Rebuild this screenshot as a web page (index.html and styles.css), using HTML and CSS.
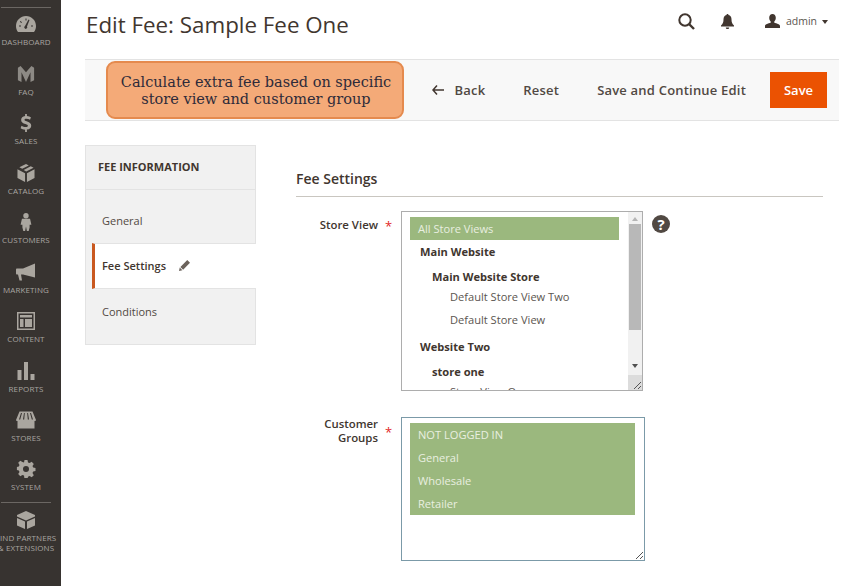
FILE: index.html
```html
<!DOCTYPE html>
<html lang="en">
<head>
<meta charset="UTF-8">
<title>Edit Fee: Sample Fee One</title>
<link rel="stylesheet" href="styles.css">
</head>
<body>
<div class="page">
  <nav class="sidebar">
    <a class="nav-item first">
      <svg viewBox="0 0 20 16"><path fill-rule="evenodd" d="M10 0C4.500 0 0 4.400 0 10c0 2.300.7 4.300 2 6h16c1.300-1.700 2-3.700 2-6 0-5.600-4.500-10-10-10zM9 10l3.500-6.500 1 .5L11 10.500a1.500 1.500 0 1 1-2-.5zM3 9.500h2v1H3zM15 9.500h2v1h-2zM4.500 5l1.500 1.300-.7.7-1.500-1.300zM9.500 2.500h1v2h-1z"/></svg>
      <span>DASHBOARD</span>
    </a>
    <a class="nav-item">
      <svg class="icon-faq" viewBox="0 0 18 20"><path d="M0 3l3-2 6 7 6-7 3 2v14l-4 2V8l-5 11-5-11v11l-4-2z"/></svg>
      <span>FAQ</span>
    </a>
    <a class="nav-item">
      <svg viewBox="0 0 12 20"><path d="M5 0h2v2.200c2 .2 3.500.8 4.500 1.500l-1 2.800C9.300 5.700 7.900 5.200 6.300 5.200c-1.300 0-2 .5-2 1.200 0 .8 1 1.200 3 2 3 1 4.500 2.300 4.500 4.600 0 2.200-1.600 3.900-4.800 4.300V20H5v-2.500c-2-.1-3.800-.8-5-1.600l1-2.900c1.300.9 3 1.500 4.800 1.500 1.400 0 2.300-.5 2.300-1.400 0-.8-.9-1.300-2.700-1.900C2.500 10.200.6 9 .6 6.600.6 4.400 2.200 2.700 5 2.300z"/></svg>
      <span>SALES</span>
    </a>
    <a class="nav-item">
      <svg viewBox="0 0 18 19"><path d="M9 0l3 1.500-7 3.600-3-1.600zM14 2.500l3 1.500-7.800 4L6.600 6.400zM0 5.500l8 4.200V19l-8-4.300zM18 5.500v9.200L10 19V9.700z"/></svg>
      <span>CATALOG</span>
    </a>
    <a class="nav-item">
      <svg viewBox="0 0 12 20"><circle cx="6" cy="3" r="3"/><path d="M1.500 6.500h9L12 13h-2v3l-1 4H7l-1-5-1 5H3l-1-4v-3H0z"/></svg>
      <span>CUSTOMERS</span>
    </a>
    <a class="nav-item">
      <svg viewBox="0 0 20 17"><path d="M19 0v14L7 11H5l1 6H3.500L2 11H1C.4 11 0 10.500 0 10V6c0-.5.4-1 1-1h6z"/></svg>
      <span>MARKETING</span>
    </a>
    <a class="nav-item">
      <svg viewBox="0 0 18 18"><path fill-rule="evenodd" d="M0 0h18v18H0zM1.500 1.500v15h15v-15zM3 3h12v2.500H3zM3 7h3.500v8H3zM8 7h7v8H8z"/></svg>
      <span>CONTENT</span>
    </a>
    <a class="nav-item">
      <svg viewBox="0 0 17 18"><path d="M0 8h4v10H0zM6.500 0h4v18h-4zM13 12h4v6h-4z"/></svg>
      <span>REPORTS</span>
    </a>
    <a class="nav-item">
      <svg viewBox="0 0 20 17"><path fill-rule="evenodd" d="M3.500 0h13L20 8.500c0 .8-.7 1-1.500 1v7.500h-17V9.500C.7 9.500 0 9.300 0 8.500zM5 1.500L3 8h1.200l1.800-6.500zM8 1.500L7 8h1.200l.6-6.500zM11.200 1.500l.6 6.500H13l-1-6.500zM14 1.500L15.800 8H17l-2-6.500z"/></svg>
      <span>STORES</span>
    </a>
    <a class="nav-item last">
      <svg viewBox="0 0 18 18"><path fill-rule="evenodd" d="M7.500 0h3l.5 2.400 1.600.7 2.100-1.300 2.100 2.100-1.300 2.100.7 1.600 2.300.4v3l-2.300.5-.7 1.600 1.300 2.100-2.100 2.100-2.100-1.300-1.600.7-.5 2.300h-3L7 15.600l-1.600-.7-2.100 1.300-2.100-2.100 1.300-2.100-.7-1.600L-.1 10V7l1.900-.5.7-1.600-1.300-2.100 2.100-2.100 2.100 1.300L7 2.400zM9 6a3 3 0 1 0 0 6 3 3 0 0 0 0-6z"/></svg>
      <span>SYSTEM</span>
    </a>
    <a class="nav-item partners">
      <svg viewBox="0 0 18 18"><path d="M9 0l9 4v1.500L9 9.500 0 5.500V4zM0 7l8 3.600V18l-8-3.600zM18 7v7.400L10 18v-7.400z"/></svg>
      <span>FIND PARTNERS<br>&amp; EXTENSIONS</span>
    </a>
  </nav>

  <main class="main">
    <header class="topbar">
      <h1>Edit Fee: Sample Fee One</h1>
      <div class="top-actions">
        <svg class="icon-search" viewBox="0 0 17 17"><circle cx="7" cy="7" r="5.700" fill="none" stroke="#41362f" stroke-width="2"/><path d="M11 11l5 5" stroke="#41362f" stroke-width="2.400"/></svg>
        <svg class="icon-bell" viewBox="0 0 13 15"><path d="M6.500 0c.6 0 1 .4 1 1 2 .5 3 2 3 4.300 0 3 .6 4.500 2.500 6.200v1H0v-1c1.900-1.700 2.500-3.200 2.500-6.200 0-2.300 1-3.800 3-4.300 0-.6.400-1 1-1zM4.800 13.500h3.400c0 1-.7 1.500-1.700 1.500s-1.700-.5-1.700-1.500z" fill="#41362f"/></svg>
        <div class="user">
          <svg viewBox="0 0 15 14"><path d="M7.500 0c2 0 3.300 1.500 3.300 3.700 0 1.600-.7 3-1.500 3.800v1.300c2 .7 5.700 1.400 5.700 3.200v2H0v-2c0-1.800 3.700-2.500 5.700-3.200V7.500c-.8-.8-1.500-2.200-1.500-3.800C4.200 1.500 5.500 0 7.500 0z" fill="#41362f"/></svg>
          <span>admin</span>
          <i class="caret"></i>
        </div>
      </div>
    </header>

    <div class="toolbar">
      <div class="callout">Calculate extra fee based on specific store view and customer group</div>
      <div class="buttons">
        <a class="btn btn-back">
          <svg viewBox="0 0 12 10"><path d="M5 .5L1 5l4 4.500M1 5h11" fill="none" stroke="#41362f" stroke-width="1.500"/></svg>
          Back
        </a>
        <a class="btn">Reset</a>
        <a class="btn">Save and Continue Edit</a>
        <a class="btn-save">Save</a>
      </div>
    </div>

    <div class="columns">
      <aside class="tabs">
        <div class="tabs-title">FEE INFORMATION</div>
        <a class="tab tab-general">General</a>
        <a class="tab tab-active">Fee Settings
          <svg viewBox="0 0 12 12"><path d="M9 0l3 3-7.500 7.500-3-3zM.8 8.300l2.900 2.900L0 12z" fill="#6b625b"/></svg>
        </a>
        <a class="tab tab-conditions">Conditions</a>
      </aside>

      <section class="content">
        <h2>Fee Settings</h2>

        <div class="field field-store">
          <label>Store View</label>
          <b class="req">*</b>
          <div class="listbox listbox-store">
            <div class="list">
              <div class="opt selected">All Store Views</div>
              <div class="opt site">Main Website</div>
              <div class="opt store">Main Website Store</div>
              <div class="opt view">Default Store View Two</div>
              <div class="opt view">Default Store View</div>
              <div class="opt site site-two">Website Two</div>
              <div class="opt store">store one</div>
              <div class="opt view">Store View One</div>
            </div>
            <div class="scrollbar">
              <i class="arrow-up"></i>
              <div class="thumb"></div>
              <i class="arrow-down"></i>
              <div class="corner">
                <svg viewBox="0 0 10 10"><path d="M9 2L2 9M9 6L6 9" stroke="#555" fill="none"/></svg>
              </div>
            </div>
          </div>
          <span class="help">?</span>
        </div>

        <div class="field field-groups">
          <label>Customer<br>Groups</label>
          <b class="req">*</b>
          <div class="listbox listbox-groups">
            <div class="list">
              <div class="opt selected">NOT LOGGED IN</div>
              <div class="opt selected">General</div>
              <div class="opt selected">Wholesale</div>
              <div class="opt selected">Retailer</div>
            </div>
            <svg class="grip" viewBox="0 0 10 10"><path d="M9 2L2 9M9 6L6 9" stroke="#555" fill="none"/></svg>
          </div>
        </div>
      </section>
    </div>
  </main>
</div>
</body>
</html>
```

FILE: styles.css
```css
html, body {
  margin: 0;
  height: 100%;
  overflow: hidden;
}
body {
  font-family: "Open Sans", sans-serif;
  color: #41362f;
  background: #fff;
}
a {
  color: inherit;
  text-decoration: none;
}
.page {
  display: flex;
  height: 586px;
}

/* left menu */
.sidebar {
  width: 61px;
  flex: none;
  box-sizing: border-box;
  background: #373330;
  overflow: hidden;
  display: flex;
  flex-direction: column;
  align-items: center;
  padding-right: 9px;
}
.nav-item {
  width: 52px;
  height: 49.500px;
  flex: none;
  display: flex;
  flex-direction: column;
  align-items: center;
  justify-content: flex-end;
  color: #a9a5a0;
  font-size: 8px;
  line-height: 10px;
  letter-spacing: .1px;
  text-align: center;
  white-space: nowrap;
}
.nav-item svg {
  height: 18px;
  width: 20px;
  fill: #aaa69f;
  margin-bottom: 4px;
}
.nav-item .icon-faq {
  fill: #8d8a85;
}
.nav-item.first {
  height: 40px;
  border-top: 1px solid #6b6763;
  margin-top: 7px;
  box-sizing: border-box;
  width: 50px;
}
.nav-item.last {
  height: 60px;
  padding-bottom: 10px;
  box-sizing: border-box;
  border-bottom: 1px solid #6b6763;
  width: 50px;
}
.nav-item.partners {
  height: 62px;
  justify-content: flex-start;
  padding-top: 8px;
  box-sizing: border-box;
}
.nav-item.partners svg {
  margin-bottom: 4px;
}

.main {
  width: 754px;
  margin-left: 24px;
  flex: none;
}

/* top */
.topbar {
  height: 59px;
  display: flex;
  justify-content: space-between;
  align-items: flex-start;
}
h1 {
  margin: 7px 0 0 1px;
  font-size: 22.350px;
  line-height: 35px;
  font-weight: 400;
  color: #41362f;
}
.top-actions {
  display: flex;
  align-items: center;
  height: 16px;
  margin-top: 13px;
  margin-right: 11px;
}
.icon-search {
  width: 17px;
  height: 17px;
}
.icon-bell {
  width: 13px;
  height: 15px;
  margin-left: 26px;
}
.user {
  display: flex;
  align-items: center;
  margin-left: 31px;
  font-size: 10.500px;
  color: #5b5550;
}
.user svg {
  width: 15px;
  height: 14px;
  margin-right: 6px;
}
.caret {
  width: 0;
  height: 0;
  margin-left: 5px;
  margin-top: 2px;
  border-left: 3.500px solid transparent;
  border-right: 3.500px solid transparent;
  border-top: 4px solid #41362f;
}

/* action bar */
.toolbar {
  height: 62px;
  box-sizing: border-box;
  background: #f8f8f8;
  border-top: 1px solid #e3e3e3;
  border-bottom: 1px solid #e3e3e3;
  display: flex;
  align-items: center;
  padding-left: 21px;
  padding-right: 12px;
  justify-content: space-between;
}
.callout {
  width: 298px;
  height: 58px;
  flex: none;
  box-sizing: border-box;
  background: #f4aa78;
  border: 2px solid #e58a4e;
  border-radius: 9px;
  font-family: "DejaVu Serif", serif;
  font-size: 14.500px;
  line-height: 17px;
  color: #2e2b3a;
  text-align: center;
  padding: 11px 5px 0 7px;
}
.buttons {
  display: flex;
  align-items: center;
  white-space: nowrap;
}
.btn {
  font-size: 13px;
  font-weight: 600;
  color: #514943;
  margin-left: 38px;
  letter-spacing: .2px;
  display: flex;
  align-items: center;
}
.btn-back {
  margin-left: 0;
}
.btn-back svg {
  width: 12px;
  height: 10px;
  margin-right: 11px;
}
.btn-save {
  width: 57px;
  height: 36px;
  flex: none;
  margin-left: 24px;
  background: #eb5202;
  color: #fff;
  font-size: 13px;
  font-weight: 600;
  line-height: 36px;
  text-align: center;
}

/* columns */
.columns {
  display: flex;
}
.tabs {
  width: 171px;
  height: 200px;
  box-sizing: border-box;
  margin-top: 24px;
  background: #f1f1f1;
  border: 1px solid #e3e3e3;
  font-size: 11px;
  flex: none;
}
.tabs-title {
  height: 44px;
  line-height: 42px;
  padding-left: 12px;
  font-weight: 700;
  color: #41362f;
  border-bottom: 1px solid #e3e3e3;
  box-sizing: border-box;
}
.tab {
  display: flex;
  align-items: center;
  padding-left: 16px;
  box-sizing: border-box;
  color: #514943;
}
.tab-general {
  height: 53px;
  padding-top: 8px;
}
.tab-active {
  height: 46px;
  margin-left: 6px;
  margin-right: -1px;
  padding-left: 7px;
  padding-bottom: 2px;
  background: #fff;
  border-left: 3px solid #c9581f;
  border-top: 1px solid #e3e3e3;
  border-bottom: 1px solid #e3e3e3;
  color: #41362f;
  font-weight: 600;
}
.tab-active svg {
  width: 11px;
  height: 11px;
  margin-left: 13px;
}
.tab-conditions {
  height: 44px;
}

.content {
  margin-left: 40px;
  width: 527px;
  flex: none;
}
h2 {
  margin: 0;
  padding-top: 49px;
  height: 26px;
  line-height: 18px;
  font-size: 14px;
  font-weight: 600;
  border-bottom: 1px solid #c9c6c0;
  color: #41362f;
}
.field {
  display: flex;
  align-items: flex-start;
  font-size: 11.100px;
  margin-top: 26px;
}
.field-store {
  margin-top: 14px;
}
.field label {
  width: 82px;
  text-align: right;
  font-size: 11.400px;
  font-weight: 600;
  line-height: 14px;
  padding-top: 7px;
  white-space: nowrap;
}
.field-groups label {
  padding-top: 0;
}
.req {
  width: 23px;
  box-sizing: border-box;
  padding-left: 7px;
  color: #e22626;
  font-size: 13px;
  font-weight: 400;
  line-height: 14px;
  padding-top: 8px;
}
.listbox {
  box-sizing: border-box;
  background: #fff;
  border: 1px solid #adadad;
  position: relative;
  overflow: hidden;
  display: flex;
}
.listbox-store {
  width: 242px;
  height: 180px;
}
.listbox-groups {
  width: 244px;
  height: 144px;
  border-color: #7b9aa8;
}
.list {
  flex: 1;
  padding: 5px 9px 0 8px;
}
.opt {
  line-height: 23px;
  white-space: nowrap;
  color: #5b5550;
}
.selected {
  background: #9bb87e;
  color: #e9efe0;
  padding-left: 8px;
}
.site {
  padding-left: 10px;
  font-weight: 700;
  color: #41362f;
}
.site-two {
  margin-top: 4px;
}
.store {
  padding-left: 22px;
  padding-top: 6px;
  line-height: 16px;
  font-weight: 700;
  color: #41362f;
}
.view {
  padding-left: 40px;
}
.scrollbar {
  width: 14px;
  flex: none;
  background: #f1f1f1;
  display: flex;
  flex-direction: column;
  align-items: center;
}
.arrow-up, .arrow-down {
  width: 0;
  height: 0;
  border-left: 3.500px solid transparent;
  border-right: 3.500px solid transparent;
}
.arrow-up {
  margin-top: 5px;
  border-bottom: 4px solid #b5b5b5;
}
.thumb {
  width: 12px;
  height: 106px;
  margin-top: 3px;
  background: #b8b8b8;
}
.arrow-down {
  margin-top: 34px;
  border-top: 4px solid #505050;
}
.corner {
  width: 14px;
  height: 15px;
  margin-top: auto;
  background: #dcdcdc;
  display: flex;
  align-items: flex-end;
  justify-content: flex-end;
}
.corner svg {
  width: 10px;
  height: 10px;
}
.grip {
  position: absolute;
  right: 0;
  bottom: 0;
  width: 10px;
  height: 10px;
}
.help {
  width: 18px;
  height: 18px;
  margin-left: 9px;
  margin-top: 4px;
  border-radius: 50%;
  background: #514943;
  color: #fff;
  font-size: 15px;
  font-weight: 700;
  line-height: 18px;
  text-align: center;
}
```
